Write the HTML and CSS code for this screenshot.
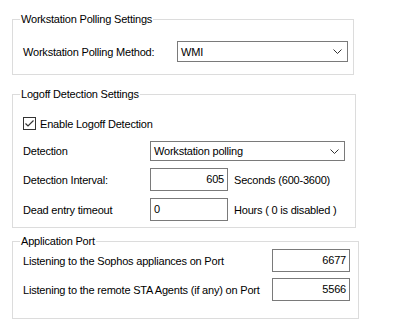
FILE: index.html
```html
<!DOCTYPE html>
<html lang="en">
<head>
  <meta charset="UTF-8" />
  <title>Workstation Settings</title>
  <link rel="stylesheet" href="styles.css">
</head>
<body>
  <div class="panel">
    <fieldset class="group group-polling">
      <legend>Workstation Polling Settings</legend>
      <div class="row polling-row">
        <label>Workstation Polling Method:</label>
        <div class="combo combo-wmi">
          <span>WMI</span>
          <svg class="chev" width="9" height="5" viewBox="0 0 9 5"><path d="M0.5 0.5 L4.5 4.5 L8.5 0.5" fill="none" stroke="#333" stroke-width="1"/></svg>
        </div>
      </div>
    </fieldset>

    <fieldset class="group group-logoff">
      <legend>Logoff Detection Settings</legend>
      <div class="check-row">
        <span class="checkbox">
          <svg width="11" height="11" viewBox="0 0 11 11"><path d="M1.5 5.5 L4 8 L9.5 2.5" fill="none" stroke="#333" stroke-width="1.2"/></svg>
        </span>
        <span>Enable Logoff Detection</span>
      </div>
      <div class="logoff-grid">
        <label>Detection</label>
        <div class="combo combo-detect">
          <span>Workstation polling</span>
          <svg class="chev" width="9" height="5" viewBox="0 0 9 5"><path d="M0.5 0.5 L4.5 4.5 L8.5 0.5" fill="none" stroke="#333" stroke-width="1"/></svg>
        </div>
        <label>Detection Interval:</label>
        <div class="field-line">
          <div class="textbox num">605</div>
          <span>Seconds (600-3600)</span>
        </div>
        <label>Dead entry timeout</label>
        <div class="field-line">
          <div class="textbox">0</div>
          <span>Hours ( 0 is disabled )</span>
        </div>
      </div>
    </fieldset>

    <fieldset class="group group-port">
      <legend>Application Port</legend>
      <div class="port-grid">
        <label>Listening to the Sophos appliances on Port</label>
        <div class="textbox num port">6677</div>
        <label>Listening to the remote STA Agents (if any) on Port</label>
        <div class="textbox num port">5566</div>
      </div>
    </fieldset>
  </div>
</body>
</html>
```

FILE: styles.css
```css
html, body {
  margin: 0;
  padding: 0;
  background: #fff;
  font-family: "Liberation Sans", Arial, sans-serif;
  font-size: 11px;
  letter-spacing: -0.2px;
  color: #000;
}

.panel {
  padding: 12px 0 0 12px;
  display: flex;
  flex-direction: column;
}

.group {
  margin: 0;
  padding: 0 0 0 10px;
  border: 1px solid #dcdcdc;
  box-sizing: border-box;
  min-width: 0;
}

.group legend {
  margin-left: -3px;
  padding: 0 1px;
  line-height: 14px;
}

.group-polling {
  width: 342px;
  padding-top: 15px;
  padding-bottom: 12px;
}

.group-logoff {
  width: 344px;
  margin-top: 12px;
  padding-top: 14px;
  padding-bottom: 6px;
}

.group-port {
  width: 347px;
  margin-top: 6px;
  padding-top: 1px;
  padding-bottom: 17px;
}

.row {
  display: flex;
  align-items: center;
}

.polling-row label {
  width: 154px;
}

.combo {
  display: flex;
  align-items: center;
  justify-content: space-between;
  box-sizing: border-box;
  border: 1px solid #7a7a7a;
  padding: 0 5px 0 3px;
}

.combo-wmi {
  width: 171px;
  height: 21px;
}

.combo-detect {
  width: 195px;
  height: 20px;
}

.check-row {
  display: flex;
  align-items: center;
  gap: 4px;
  height: 17px;
}

.checkbox {
  width: 13px;
  height: 13px;
  box-sizing: border-box;
  border: 1px solid #333;
  display: flex;
  align-items: center;
  justify-content: center;
}

.logoff-grid {
  display: grid;
  grid-template-columns: 127px auto;
  align-items: center;
  margin-top: 9px;
  row-gap: 7px;
}

.field-line {
  display: flex;
  align-items: center;
  gap: 6px;
}

.textbox {
  box-sizing: border-box;
  border: 1px solid #7a7a7a;
  width: 78px;
  height: 23px;
  line-height: 21px;
  padding: 0 3px;
}

.textbox.num {
  text-align: right;
}

.port-grid {
  display: grid;
  grid-template-columns: 249px auto;
  align-items: center;
  row-gap: 6px;
}

.textbox.port {
  height: 23px;
}
```
